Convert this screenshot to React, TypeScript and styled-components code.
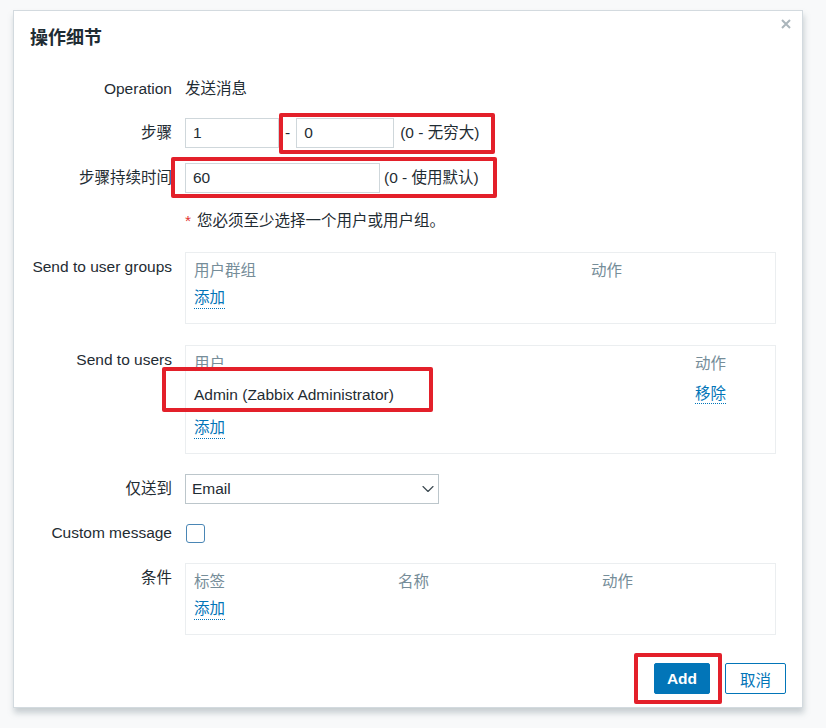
import React from 'react';
import styled, { createGlobalStyle } from 'styled-components';
import { ChevronDown } from 'lucide-react';

const GlobalStyle = createGlobalStyle`
  html, body { margin: 0; padding: 0; background: #f8f9fa; }
  body {
    font-family: "Liberation Sans", "Noto Sans CJK SC", sans-serif;
    font-size: 15.5px;
    color: #1f2c33;
  }
  * { box-sizing: border-box; }
`;

const Page = styled.div`
  width: 826px;
  height: 728px;
  padding: 10px 0 0 13px;
  background: #f8f9fa;
`;

const Dialog = styled.div`
  position: relative;
  width: 790px;
  height: 698px;
  background: #fff;
  border: 1px solid #d3dadf;
  box-shadow: 1px 5px 6px rgba(110, 125, 135, 0.35);
  display: flex;
  flex-direction: column;
`;

const Header = styled.div`
  display: flex;
  justify-content: space-between;
  align-items: flex-start;
  padding: 8px 11px 0 16px;
`;

const Title = styled.h4`
  margin: 7px 0 0;
  font-size: 18px;
  line-height: 24px;
  font-weight: bold;
  color: #1f2c33;
`;

const Close = styled.button`
  border: 0;
  background: none;
  padding: 0;
  width: 10px;
  height: 10px;
  color: #aab5bb;
  display: flex;
  cursor: pointer;
`;

const Form = styled.div`
  display: flex;
  flex-direction: column;
  padding-right: 26px;
`;

const Row = styled.div<{ $mt: number }>`
  display: grid;
  grid-template-columns: 158px 1fr;
  column-gap: 13px;
  align-items: start;
  margin-top: ${(p) => p.$mt}px;
`;

const Label = styled.div`
  text-align: right;
  line-height: 30px;
  white-space: nowrap;
  color: #1f2c33;
`;

const Field = styled.div<{ $gap?: number }>`
  display: flex;
  align-items: center;
  gap: ${(p) => p.$gap ?? 0}px;
  min-height: 30px;
  line-height: 30px;
`;

const TextInput = styled.input<{ $w: number }>`
  width: ${(p) => p.$w}px;
  height: 30px;
  border: 1px solid #cfd7db;
  padding: 0 7px;
  font: inherit;
  color: #1f2c33;
  background: #fff;
  outline: none;
`;

const Hint = styled.span`
  color: #1f2c33;
  white-space: nowrap;
`;

const Note = styled.div`
  line-height: 20px;
  color: #1f2c33;
`;

const Req = styled.span`
  color: #e33734;
  margin-right: 6px;
`;

const TableBox = styled.div`
  border: 1px solid #ebeef0;
  padding: 2px 8px 8px;
`;

const TRow = styled.div<{ $cols: string; $h: number }>`
  display: grid;
  grid-template-columns: ${(p) => p.$cols};
  height: ${(p) => p.$h}px;
  align-items: center;
`;

const Th = styled.span`
  color: #768d99;
`;

const Td = styled.span`
  color: #1f2c33;
`;

const Link = styled.a`
  justify-self: start;
  color: #0275b8;
  text-decoration: none;
  border-bottom: 1px dotted #0275b8;
  line-height: 1.2;
  cursor: pointer;
`;

const Select = styled.div`
  width: 254px;
  height: 30px;
  border: 1px solid #bcc6cb;
  background: #fff;
  display: flex;
  align-items: center;
  justify-content: space-between;
  padding: 0 0 0 6px;
  color: #1f2c33;
`;

const Checkbox = styled.span`
  display: block;
  width: 19px;
  height: 19px;
  margin-left: 1px;
  border: 1.5px solid #4a86b5;
  border-radius: 3px;
  background: #fff;
`;

const Footer = styled.div`
  display: flex;
  justify-content: flex-end;
  gap: 15px;
  padding-right: 16px;
  margin-top: 28px;
`;

const Button = styled.button<{ $primary?: boolean; $w: number }>`
  width: ${(p) => p.$w}px;
  height: 31px;
  padding: 0;
  font: inherit;
  font-weight: ${(p) => (p.$primary ? 'bold' : 'normal')};
  border-radius: 2px;
  border: 1px solid #0275b8;
  background: ${(p) => (p.$primary ? '#0275b8' : '#fff')};
  color: ${(p) => (p.$primary ? '#fff' : '#0275b8')};
  cursor: pointer;
`;

const Highlight = styled.div`
  position: absolute;
  border: 4px solid #e3202a;
  border-radius: 2px;
  pointer-events: none;
`;

const marks = [
  { left: 265, top: 102, width: 216, height: 41 },
  { left: 157, top: 146, width: 326, height: 41 },
  { left: 148, top: 356, width: 271, height: 45 },
  { left: 620, top: 642, width: 88, height: 51 },
];

export default function App() {
  return (
    <>
      <GlobalStyle />
      <Page>
        <Dialog>
          <Header>
            <Title>操作细节</Title>
            <Close aria-label="关闭">
              <svg width="10" height="10" viewBox="0 0 10 10">
                <path d="M1 1L9 9M9 1L1 9" stroke="currentColor" strokeWidth="2" />
              </svg>
            </Close>
          </Header>
          <Form>
            <Row $mt={24}>
              <Label>Operation</Label>
              <Field>发送消息</Field>
            </Row>
            <Row $mt={14}>
              <Label>步骤</Label>
              <Field $gap={6}>
                <TextInput $w={94} defaultValue="1" />
                <Hint>-</Hint>
                <TextInput $w={98} defaultValue="0" />
                <Hint>(0 - 无穷大)</Hint>
              </Field>
            </Row>
            <Row $mt={15}>
              <Label>步骤持续时间</Label>
              <Field $gap={4}>
                <TextInput $w={195} defaultValue="60" />
                <Hint>(0 - 使用默认)</Hint>
              </Field>
            </Row>
            <Row $mt={18}>
              <Label />
              <Note>
                <Req>*</Req>您必须至少选择一个用户或用户组。
              </Note>
            </Row>
            <Row $mt={21}>
              <Label>Send to user groups</Label>
              <TableBox>
                <TRow $cols="397px 1fr" $h={28}>
                  <Th>用户群组</Th>
                  <Th>动作</Th>
                </TRow>
                <TRow $cols="1fr" $h={32}>
                  <Link>添加</Link>
                </TRow>
              </TableBox>
            </Row>
            <Row $mt={21}>
              <Label>Send to users</Label>
              <TableBox>
                <TRow $cols="501px 1fr" $h={28}>
                  <Th>用户</Th>
                  <Th>动作</Th>
                </TRow>
                <TRow $cols="501px 1fr" $h={37}>
                  <Td>Admin (Zabbix Administrator)</Td>
                  <Link>移除</Link>
                </TRow>
                <TRow $cols="1fr" $h={32}>
                  <Link>添加</Link>
                </TRow>
              </TableBox>
            </Row>
            <Row $mt={20}>
              <Label>仅送到</Label>
              <Field>
                <Select>
                  <span>Email</span>
                  <ChevronDown size={20} strokeWidth={1.4} color="#3d4a52" />
                </Select>
              </Field>
            </Row>
            <Row $mt={14}>
              <Label>Custom message</Label>
              <Field>
                <Checkbox />
              </Field>
            </Row>
            <Row $mt={15}>
              <Label>条件</Label>
              <TableBox>
                <TRow $cols="204px 204px 1fr" $h={28}>
                  <Th>标签</Th>
                  <Th>名称</Th>
                  <Th>动作</Th>
                </TRow>
                <TRow $cols="1fr" $h={32}>
                  <Link>添加</Link>
                </TRow>
              </TableBox>
            </Row>
          </Form>
          <Footer>
            <Button $primary $w={56}>Add</Button>
            <Button $w={61}>取消</Button>
          </Footer>
          {marks.map((m, i) => (
            <Highlight
              key={i}
              style={{ left: m.left, top: m.top, width: m.width, height: m.height }}
            />
          ))}
        </Dialog>
      </Page>
    </>
  );
}
